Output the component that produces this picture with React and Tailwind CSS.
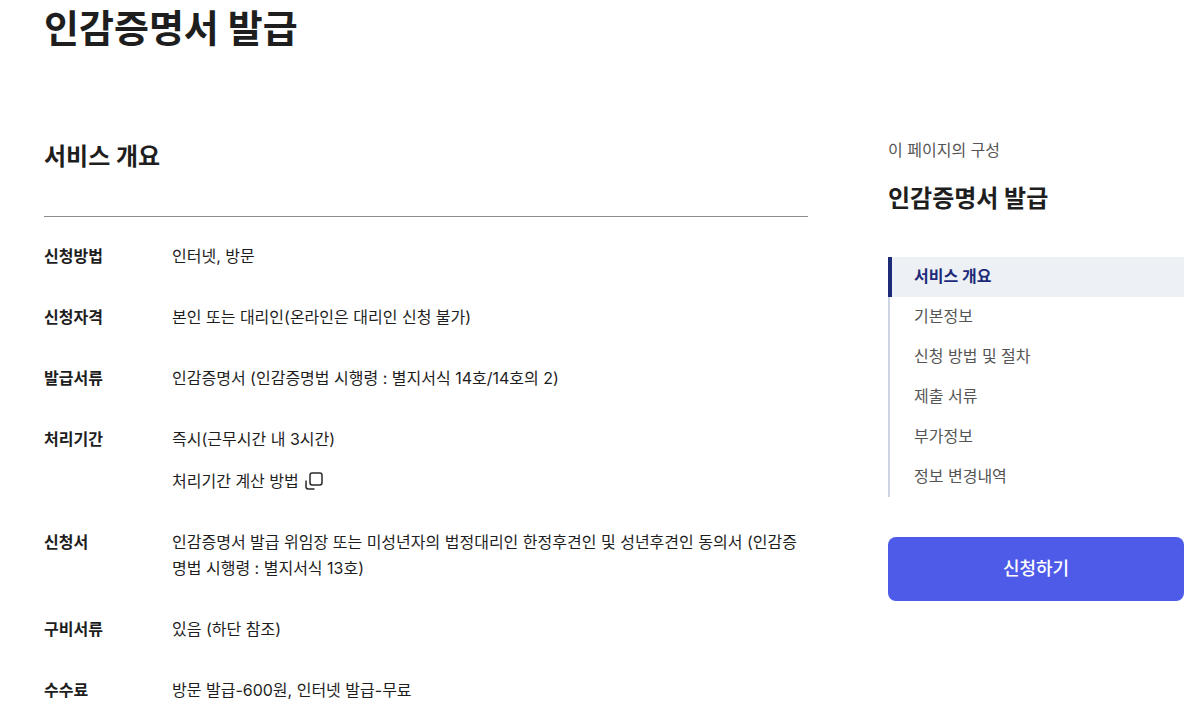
import React from 'react';

const summary = [
  { label: '신청방법', lines: ['인터넷, 방문'] },
  { label: '신청자격', lines: ['본인 또는 대리인(온라인은 대리인 신청 불가)'] },
  { label: '발급서류', lines: ['인감증명서 (인감증명법 시행령 : 별지서식 14호/14호의 2)'] },
  { label: '처리기간', lines: ['즉시(근무시간 내 3시간)'], popup: '처리기간 계산 방법' },
  {
    label: '신청서',
    lines: ['인감증명서 발급 위임장 또는 미성년자의 법정대리인 한정후견인 및 성년후견인 동의서 (인감증명법 시행령 : 별지서식 13호)'],
  },
  { label: '구비서류', lines: ['있음 (하단 참조)'] },
  { label: '수수료', lines: ['방문 발급-600원, 인터넷 발급-무료'] },
];

const sections = ['서비스 개요', '기본정보', '신청 방법 및 절차', '제출 서류', '부가정보', '정보 변경내역'];

const PopupIcon = () => (
  <svg width="18" height="18" viewBox="0 0 18 18" fill="none" stroke="#2a2a2a" strokeWidth="1.5" aria-hidden="true">
    <rect x="5" y="1" width="12" height="12" rx="2.2" />
    <path d="M1 8.5v6.3a2.2 2.2 0 0 0 2.2 2.2h6.3" />
  </svg>
);

const SummaryRow = ({ item }) => (
  <div className="flex">
    <dt className="w-32 shrink-0 font-bold">{item.label}</dt>
    <dd className="flex min-w-0 flex-1 flex-col items-start gap-4">
      {item.lines.map((line) => (
        <p key={line}>{line}</p>
      ))}
      {item.popup && (
        <button type="button" className="flex cursor-pointer items-center gap-1.5">
          {item.popup}
          <PopupIcon />
        </button>
      )}
    </dd>
  </div>
);

const SideNav = () => (
  <aside className="w-74 shrink-0 pt-3">
    <p className="text-base leading-6 text-[#555555]">이 페이지의 구성</p>
    <h2 className="mt-5 text-2xl leading-[34px] font-bold">인감증명서 발급</h2>
    <nav className="mt-[41px]" aria-label="이 페이지의 구성">
      <ul>
        {sections.map((name, i) => (
          <li key={name}>
            <a
              href={`#section-${i + 1}`}
              aria-current={i === 0 ? 'true' : undefined}
              className={
                i === 0
                  ? 'block h-10 border-l-4 border-[#1d2b78] bg-[#edf1f5] pl-[22px] leading-[38px] font-bold text-[#1d2b78]'
                  : 'block h-10 border-l-2 border-[#cdd5e4] pl-6 leading-[38px] text-[#555555]'
              }
            >
              {name}
            </a>
          </li>
        ))}
      </ul>
    </nav>
    <button type="button" className="mt-10 h-16 w-full cursor-pointer rounded-lg bg-[#4e5be9] text-lg font-medium text-white">
      신청하기
    </button>
  </aside>
);

export default function App() {
  return (
    <div className="bg-white pr-[19px] pl-11 font-[Inter,'Noto_Sans_CJK_KR',sans-serif] text-base text-[#1e1e1e]">
      <h1 className="text-[38px] leading-[56px] font-bold">인감증명서 발급</h1>
      <div className="mt-[70px] flex items-start gap-20">
        <main className="min-w-0 flex-1" id="section-1">
          <h2 className="pt-3 text-2xl leading-[38px] font-bold">서비스 개요</h2>
          <dl className="mt-10 flex flex-col gap-[35px] border-t border-[#8a8c8e] pt-[26px] leading-[26px]">
            {summary.map((item) => (
              <SummaryRow key={item.label} item={item} />
            ))}
          </dl>
        </main>
        <SideNav />
      </div>
    </div>
  );
}
